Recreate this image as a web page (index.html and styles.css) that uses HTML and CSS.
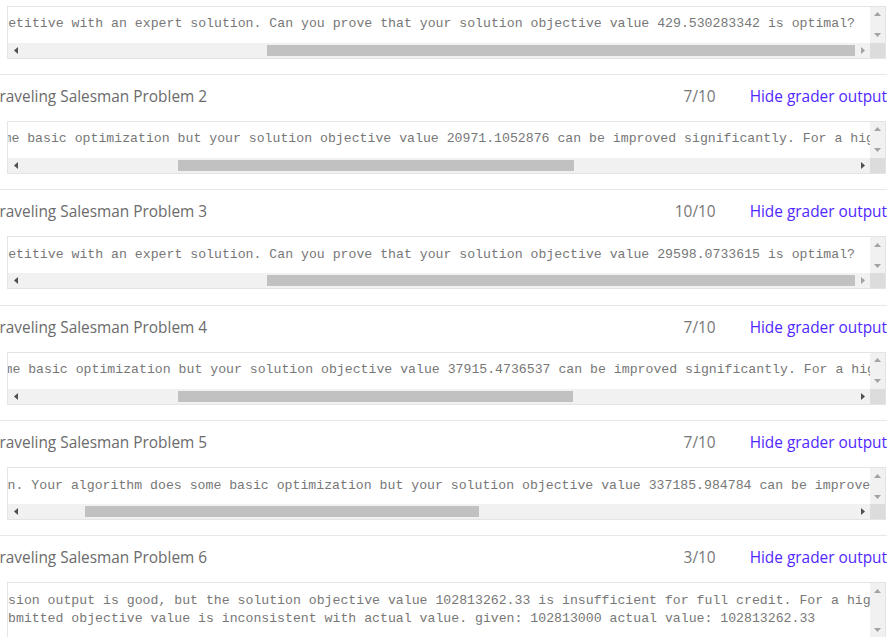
FILE: index.html
```html
<!DOCTYPE html>
<html lang="en">
<head>
<meta charset="utf-8">
<title>Programming Assignment Results</title>
<link rel="stylesheet" href="styles.css">
</head>
<body>
<div class="page">
  <section class="part">
    <div class="part-header">
      <span class="part-title">Traveling Salesman Problem 1</span>
      <span class="part-score">10/10</span>
      <a class="part-toggle" href="#">Hide grader output</a>
    </div>
    <div class="output" data-scroll="max">
      <pre class="output-text">Awesome Optimization!  Your solution is competitive with an expert solution. Can you prove that your solution objective value 429.530283342 is optimal?</pre>
      <div class="vbar"><span class="sb-btn is-disabled"><svg width="7" height="4" viewBox="0 0 7 4"><polygon points="0,4 3.5,0 7,4"/></svg></span><span class="sb-track"></span><span class="sb-btn is-disabled"><svg width="7" height="4" viewBox="0 0 7 4"><polygon points="0,0 7,0 3.5,4"/></svg></span></div>
      <div class="hbar"><span class="sb-btn btn-left"><svg width="4" height="7" viewBox="0 0 4 7"><polygon points="4,0 4,7 0,3.5"/></svg></span><span class="sb-track hbar-track"><span class="hbar-thumb"></span></span><span class="sb-btn btn-right"><svg width="4" height="7" viewBox="0 0 4 7"><polygon points="0,0 4,3.5 0,7"/></svg></span></div>
      <div class="sb-corner"></div>
    </div>
  </section>
  <section class="part">
    <div class="part-header">
      <span class="part-title">Traveling Salesman Problem 2</span>
      <span class="part-score">7/10</span>
      <a class="part-toggle" href="#">Hide grader output</a>
    </div>
    <div class="output" data-scroll="338">
      <pre class="output-text">Good Optimization. Your algorithm does some basic optimization but your solution objective value 20971.1052876 can be improved significantly. For a higher grade, you will need to improve the objective value to 20800 or better.</pre>
      <div class="vbar"><span class="sb-btn is-disabled"><svg width="7" height="4" viewBox="0 0 7 4"><polygon points="0,4 3.5,0 7,4"/></svg></span><span class="sb-track"></span><span class="sb-btn is-disabled"><svg width="7" height="4" viewBox="0 0 7 4"><polygon points="0,0 7,0 3.5,4"/></svg></span></div>
      <div class="hbar"><span class="sb-btn btn-left"><svg width="4" height="7" viewBox="0 0 4 7"><polygon points="4,0 4,7 0,3.5"/></svg></span><span class="sb-track hbar-track"><span class="hbar-thumb"></span></span><span class="sb-btn btn-right"><svg width="4" height="7" viewBox="0 0 4 7"><polygon points="0,0 4,3.5 0,7"/></svg></span></div>
      <div class="sb-corner"></div>
    </div>
  </section>
  <section class="part">
    <div class="part-header">
      <span class="part-title">Traveling Salesman Problem 3</span>
      <span class="part-score">10/10</span>
      <a class="part-toggle" href="#">Hide grader output</a>
    </div>
    <div class="output" data-scroll="max">
      <pre class="output-text">Awesome Optimization!  Your solution is competitive with an expert solution. Can you prove that your solution objective value 29598.0733615 is optimal?</pre>
      <div class="vbar"><span class="sb-btn is-disabled"><svg width="7" height="4" viewBox="0 0 7 4"><polygon points="0,4 3.5,0 7,4"/></svg></span><span class="sb-track"></span><span class="sb-btn is-disabled"><svg width="7" height="4" viewBox="0 0 7 4"><polygon points="0,0 7,0 3.5,4"/></svg></span></div>
      <div class="hbar"><span class="sb-btn btn-left"><svg width="4" height="7" viewBox="0 0 4 7"><polygon points="4,0 4,7 0,3.5"/></svg></span><span class="sb-track hbar-track"><span class="hbar-thumb"></span></span><span class="sb-btn btn-right"><svg width="4" height="7" viewBox="0 0 4 7"><polygon points="0,0 4,3.5 0,7"/></svg></span></div>
      <div class="sb-corner"></div>
    </div>
  </section>
  <section class="part">
    <div class="part-header">
      <span class="part-title">Traveling Salesman Problem 4</span>
      <span class="part-score">7/10</span>
      <a class="part-toggle" href="#">Hide grader output</a>
    </div>
    <div class="output" data-scroll="337">
      <pre class="output-text">Good Optimization. Your algorithm does some basic optimization but your solution objective value 37915.4736537 can be improved significantly. For a higher grade, you will need to improve the objective value to 37600 or better.</pre>
      <div class="vbar"><span class="sb-btn is-disabled"><svg width="7" height="4" viewBox="0 0 7 4"><polygon points="0,4 3.5,0 7,4"/></svg></span><span class="sb-track"></span><span class="sb-btn is-disabled"><svg width="7" height="4" viewBox="0 0 7 4"><polygon points="0,0 7,0 3.5,4"/></svg></span></div>
      <div class="hbar"><span class="sb-btn btn-left"><svg width="4" height="7" viewBox="0 0 4 7"><polygon points="4,0 4,7 0,3.5"/></svg></span><span class="sb-track hbar-track"><span class="hbar-thumb"></span></span><span class="sb-btn btn-right"><svg width="4" height="7" viewBox="0 0 4 7"><polygon points="0,0 4,3.5 0,7"/></svg></span></div>
      <div class="sb-corner"></div>
    </div>
  </section>
  <section class="part">
    <div class="part-header">
      <span class="part-title">Traveling Salesman Problem 5</span>
      <span class="part-score">7/10</span>
      <a class="part-toggle" href="#">Hide grader output</a>
    </div>
    <div class="output" data-scroll="136">
      <pre class="output-text">Good Optimization. Your algorithm does some basic optimization but your solution objective value 337185.984784 can be improved significantly. For a higher grade, you will need to improve the objective value to 323000 or better.</pre>
      <div class="vbar"><span class="sb-btn is-disabled"><svg width="7" height="4" viewBox="0 0 7 4"><polygon points="0,4 3.5,0 7,4"/></svg></span><span class="sb-track"></span><span class="sb-btn is-disabled"><svg width="7" height="4" viewBox="0 0 7 4"><polygon points="0,0 7,0 3.5,4"/></svg></span></div>
      <div class="hbar"><span class="sb-btn btn-left"><svg width="4" height="7" viewBox="0 0 4 7"><polygon points="4,0 4,7 0,3.5"/></svg></span><span class="sb-track hbar-track"><span class="hbar-thumb"></span></span><span class="sb-btn btn-right"><svg width="4" height="7" viewBox="0 0 4 7"><polygon points="0,0 4,3.5 0,7"/></svg></span></div>
      <div class="sb-corner"></div>
    </div>
  </section>
  <section class="part">
    <div class="part-header">
      <span class="part-title">Traveling Salesman Problem 6</span>
      <span class="part-score">3/10</span>
      <a class="part-toggle" href="#">Hide grader output</a>
    </div>
    <div class="output" data-scroll="96">
      <pre class="output-text">Your submission output is good, but the solution objective value 102813262.33 is insufficient for full credit. For a higher grade, you will need to improve the objective value to 78478868 or better.
Warning: submitted objective value is inconsistent with actual value. given: 102813000 actual value: 102813262.33</pre>
      <div class="vbar"><span class="sb-btn is-disabled"><svg width="7" height="4" viewBox="0 0 7 4"><polygon points="0,4 3.5,0 7,4"/></svg></span><span class="sb-track"></span><span class="sb-btn is-disabled"><svg width="7" height="4" viewBox="0 0 7 4"><polygon points="0,0 7,0 3.5,4"/></svg></span></div>
      <div class="hbar"><span class="sb-btn btn-left"><svg width="4" height="7" viewBox="0 0 4 7"><polygon points="4,0 4,7 0,3.5"/></svg></span><span class="sb-track hbar-track"><span class="hbar-thumb"></span></span><span class="sb-btn btn-right"><svg width="4" height="7" viewBox="0 0 4 7"><polygon points="0,0 4,3.5 0,7"/></svg></span></div>
      <div class="sb-corner"></div>
    </div>
  </section>
</div>
<script src="script.js"></script>
</body>
</html>
```

FILE: styles.css
```css
html, body {
  margin: 0;
  padding: 0;
  background: #ffffff;
  overflow: hidden;
}

.page {
  width: 896px;
  margin: -41.5px 0 0 -9px;
  font-family: "Open Sans", "Liberation Sans", sans-serif;
}

.part {
  border-top: 1px solid #e8e8e8;
  padding-top: 10px;
  margin-bottom: 15.4px;
}

.part-header {
  display: flex;
  align-items: center;
  height: 24px;
  font-size: 15.4px;
  line-height: 24px;
}

.part-title {
  flex: 1;
  color: #6b6b6b;
}

.part-score {
  color: #777777;
  text-align: right;
}

.part-toggle {
  margin-left: 34px;
  color: #5028ff;
  text-decoration: none;
}

.output {
  display: grid;
  grid-template-columns: minmax(0, 1fr) 15px;
  grid-template-rows: auto 15px;
  margin: 12px 1px 0 16px;
  border: 1px solid #e4e4e4;
  background: #ffffff;
}

.output-text {
  margin: 0;
  padding: 8.5px 15px 9.5px 9px;
  overflow: hidden;
  white-space: pre;
  font-family: "Liberation Mono", "Courier New", monospace;
  font-size: 13.2px;
  line-height: 18px;
  color: #777777;
}

.vbar {
  display: flex;
  flex-direction: column;
  background: #f1f1f1;
}

.hbar {
  display: flex;
  background: #f1f1f1;
}

.sb-btn {
  flex: none;
  width: 15px;
  height: 15px;
  display: flex;
  align-items: center;
  justify-content: center;
  color: #505050;
}

.sb-btn svg {
  display: block;
  fill: currentColor;
}

.sb-btn.is-disabled {
  color: #a3a3a3;
}

.sb-track {
  flex: 1;
  min-width: 0;
  min-height: 0;
}

.hbar-track {
  display: flex;
  align-items: flex-start;
}

.hbar-thumb {
  flex: none;
  height: 11px;
  margin-top: 2px;
  background: #c1c1c1;
}

.sb-corner {
  background: #dcdcdc;
}
```

FILE: script.js
```js
document.querySelectorAll('.output').forEach(function (out) {
  var text = out.querySelector('.output-text');
  var v = out.dataset.scroll;
  var max = text.scrollWidth - text.clientWidth;
  text.scrollLeft = v === 'max' ? max : Math.min(Number(v), max);
  var left = text.scrollLeft;
  var track = out.querySelector('.hbar-track');
  var tw = track.clientWidth;
  var thumb = out.querySelector('.hbar-thumb');
  thumb.style.width = (tw * text.clientWidth / text.scrollWidth) + 'px';
  thumb.style.marginLeft = (tw * left / text.scrollWidth) + 'px';
  out.querySelector('.btn-left').classList.toggle('is-disabled', left <= 0);
  out.querySelector('.btn-right').classList.toggle('is-disabled', left >= max - 0.5);
});
```
